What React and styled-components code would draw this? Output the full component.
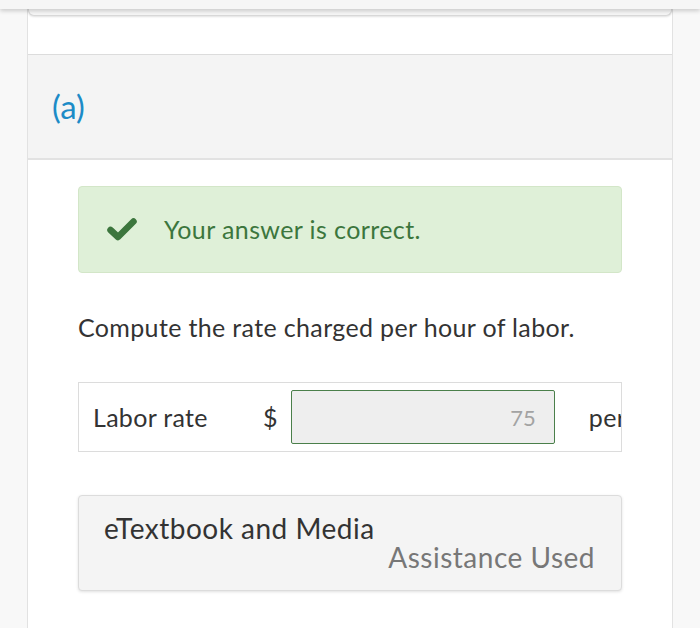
import React from "react";
import styled, { createGlobalStyle } from "styled-components";

const Global = createGlobalStyle`
  html, body { margin: 0; padding: 0; background: #f8f8f8; }
  body { font-family: Lato, "Open Sans", sans-serif; overflow: hidden; }
  * { box-sizing: border-box; }
`;

const Page = styled.div`
  width: 700px;
  height: 628px;
  position: relative;
  overflow: hidden;
  background: #f8f8f8;
`;

const TopBar = styled.div`
  height: 9px;
  background: #f6f6f6;
  box-shadow: 0 2px 4px rgba(0, 0, 0, 0.18);
  position: relative;
  z-index: 2;
`;

const Column = styled.div`
  margin: -9px 27px 0 27px;
  background: #fff;
  border-left: 1px solid #e2e2e2;
  border-right: 1px solid #e2e2e2;
  height: 640px;
  display: flex;
  flex-direction: column;
`;

const PrevCard = styled.div`
  height: 16px;
  border: 1px solid #d8d8d8;
  border-top: none;
  border-radius: 0 0 6px 6px;
  background: #f6f6f6;
  box-shadow: 0 1px 2px rgba(0, 0, 0, 0.12);
`;

const Section = styled.div`
  margin-top: 38px;
  border-top: 1px solid #dcdcdc;
  display: flex;
  flex-direction: column;
`;

const SectionHeader = styled.div`
  height: 105px;
  background: #f4f4f4;
  border-bottom: 2px solid #e2e2e2;
  display: flex;
  align-items: center;
  padding-left: 24px;
  padding-bottom: 2px;
  font-size: 33px;
  color: #1c8bc7;
`;

const SectionBody = styled.div`
  padding: 26px 50px 0 50px;
  display: flex;
  flex-direction: column;
`;

const Alert = styled.div`
  height: 87px;
  background: #dff0d8;
  border: 1px solid #d3e6c8;
  border-radius: 4px;
  display: flex;
  align-items: center;
  padding-left: 28px;
  padding-bottom: 2px;
  color: #3c763d;
  font-size: 25px;
  letter-spacing: 0.4px;
`;

const Check = styled.svg`
  width: 30px;
  height: 24px;
  margin-right: 27px;
  flex: none;
`;

const Question = styled.p`
  margin: 39px 0 0 0;
  font-size: 25px;
  letter-spacing: 0.35px;
  color: #333;
  line-height: 30px;
`;

const AnswerRow = styled.div`
  margin-top: 40px;
  height: 70px;
  border: 1px solid #dcdcdc;
  display: flex;
  align-items: center;
  padding-left: 14px;
  overflow: hidden;
  white-space: nowrap;
  font-size: 25px;
  letter-spacing: 0.3px;
  color: #333;
`;

const Label = styled.span`
  width: 155px;
  flex: none;
`;

const Currency = styled.span`
  flex: none;
  padding-left: 15px;
  margin-right: 13px;
`;

const Field = styled.div`
  width: 264px;
  height: 54px;
  flex: none;
  border: 1.5px solid #4a7f4a;
  border-radius: 2px;
  background: #eeeeee;
  display: flex;
  align-items: center;
  justify-content: flex-end;
  padding-right: 18px;
  color: #a3a3a3;
  font-size: 22px;
  letter-spacing: 0;
`;

const Unit = styled.span`
  margin-left: 34px;
  flex: none;
`;

const Resource = styled.div`
  margin-top: 43px;
  height: 96px;
  background: #f4f4f4;
  border: 1px solid #dcdcdc;
  border-radius: 4px;
  box-shadow: 0 1px 3px rgba(0, 0, 0, 0.12);
  display: flex;
  flex-direction: column;
  padding: 15px 26px 0 25px;
`;

const ResourceTitle = styled.div`
  font-size: 28px;
  letter-spacing: 0.5px;
  color: #333;
  line-height: 34px;
`;

const ResourceNote = styled.div`
  font-size: 28px;
  letter-spacing: 0.5px;
  color: #777;
  text-align: right;
  line-height: 24px;
`;

export default function App() {
  return (
    <Page>
      <Global />
      <TopBar />
      <Column>
        <PrevCard />
        <Section>
          <SectionHeader>(a)</SectionHeader>
          <SectionBody>
            <Alert>
              <Check viewBox="0 0 30 24">
                <path
                  d="M3.5 13 L11 20 L26.5 4.5"
                  fill="none"
                  stroke="#3c763d"
                  strokeWidth="6.5"
                  strokeLinecap="round"
                  strokeLinejoin="round"
                />
              </Check>
              Your answer is correct.
            </Alert>
            <Question>Compute the rate charged per hour of labor.</Question>
            <AnswerRow>
              <Label>Labor rate</Label>
              <Currency>$</Currency>
              <Field>75</Field>
              <Unit>per hour</Unit>
            </AnswerRow>
            <Resource>
              <ResourceTitle>eTextbook and Media</ResourceTitle>
              <ResourceNote>Assistance Used</ResourceNote>
            </Resource>
          </SectionBody>
        </Section>
      </Column>
    </Page>
  );
}
